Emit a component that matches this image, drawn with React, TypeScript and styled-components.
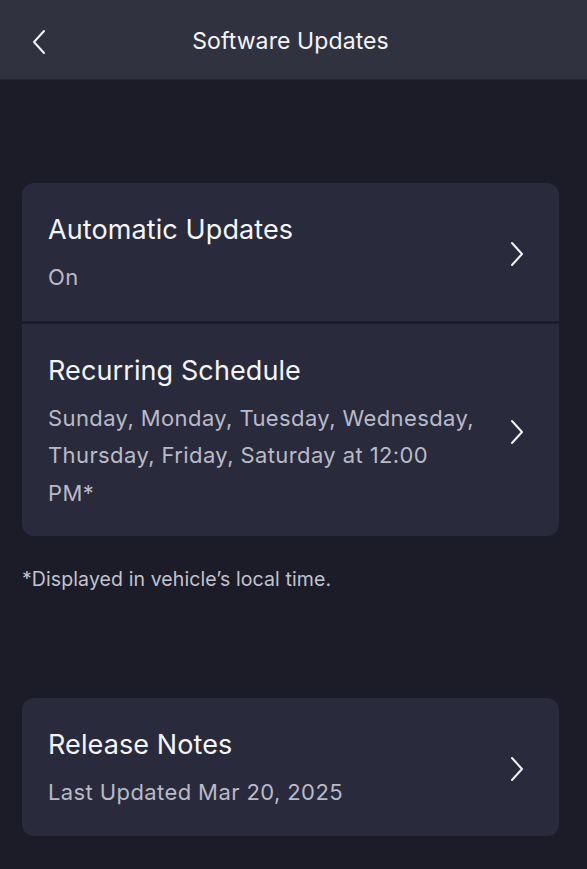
import * as React from 'react'
import styled, { createGlobalStyle } from 'styled-components'

const GlobalStyle = createGlobalStyle`
    html, body {
        margin: 0;
        padding: 0;
        background: #1b1c28;
    }
    body {
        font-family: Inter, "Noto Sans", sans-serif;
        -webkit-font-smoothing: antialiased;
    }
`

const Chevron = ({ left }: { left?: boolean }) => (
    <svg width="16" height="26" viewBox="0 0 16 26" fill="none">
        <path
            d={left ? 'M13 2 L3 13 L13 24' : 'M3 2 L13 13 L3 24'}
            stroke="#f2f3f7"
            strokeWidth="2"
            strokeLinecap="round"
            strokeLinejoin="round"
        />
    </svg>
)

type Row = { title: string; sub: string }

const settings: Row[] = [
    { title: 'Automatic Updates', sub: 'On' },
    {
        title: 'Recurring Schedule',
        sub: 'Sunday, Monday, Tuesday, Wednesday,\nThursday, Friday, Saturday at 12:00\nPM*',
    },
]

const App = () => (
    <Page>
        <GlobalStyle />
        <Header>
            <Back>
                <Chevron left />
            </Back>
            <Title>Software Updates</Title>
        </Header>
        <Body>
            <Card>
                {settings.map((row) => (
                    <Item key={row.title}>
                        <Texts>
                            <ItemTitle>{row.title}</ItemTitle>
                            <ItemSub>{row.sub}</ItemSub>
                        </Texts>
                        <Chevron />
                    </Item>
                ))}
            </Card>
            <Note>*Displayed in vehicle’s local time.</Note>
            <Card $gap>
                <Item>
                    <Texts>
                        <ItemTitle>Release Notes</ItemTitle>
                        <ItemSub>Last Updated Mar 20, 2025</ItemSub>
                    </Texts>
                    <Chevron />
                </Item>
            </Card>
        </Body>
    </Page>
)

const Page = styled.div`
    min-height: 869px;
    background: #1b1c28;
`

const Header = styled.header`
    position: relative;
    display: flex;
    align-items: center;
    justify-content: center;
    height: 80px;
    padding-top: 3px;
    background: #30323f;
    border-bottom: 1px solid #25262f;
    box-sizing: border-box;
`

const Back = styled.div`
    position: absolute;
    left: 31px;
    top: 29px;
    display: flex;
`

const Title = styled.h1`
    margin: 0 0 0 -6px;
    font-size: 23px;
    font-weight: 400;
    color: #f4f5f8;
    letter-spacing: 0.1px;
`

const Body = styled.main`
    display: flex;
    flex-direction: column;
    padding: 103px 28px 0 22px;
`

const Card = styled.section<{ $gap?: boolean }>`
    display: flex;
    flex-direction: column;
    gap: 3px;
    margin-top: ${(p) => (p.$gap ? '106px' : '0')};
    background: #1c1d29;
    border-radius: 12px;
    overflow: hidden;
`

const Item = styled.div`
    display: flex;
    align-items: center;
    gap: 20px;
    padding: 29px 34px 24px 26px;
    background: #292a3b;
`

const Texts = styled.div`
    flex: 1;
    display: flex;
    flex-direction: column;
    gap: 11px;
`

const ItemTitle = styled.div`
    font-size: 27px;
    line-height: 36px;
    color: #f4f5f8;
    letter-spacing: 0.1px;
`

const ItemSub = styled.div`
    font-size: 22px;
    line-height: 37.5px;
    color: #b9bac8;
    letter-spacing: 0.4px;
    white-space: pre-line;
`

const Note = styled.p`
    margin: 30px 0 0;
    font-size: 19.5px;
    line-height: 26px;
    color: #c2c3ce;
    letter-spacing: 0.1px;
`

export default App
